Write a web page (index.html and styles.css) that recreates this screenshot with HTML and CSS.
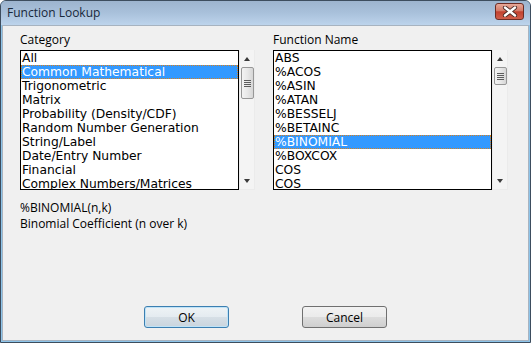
FILE: index.html
```html
<!DOCTYPE html>
<html lang="en">
<head>
    <meta charset="UTF-8">
    <title>Function Lookup</title>
    <link rel="stylesheet" href="styles.css">
</head>
<body>
<div class="window">
    <div class="titlebar">
        <span class="title">Function Lookup</span>
        <button class="close" title="Close">
            <svg width="16" height="11" viewBox="0 0 16 11">
                <path d="M3 1.5 L13 9.5 M13 1.5 L3 9.5" stroke="#4a2a26" stroke-width="4.2" stroke-linecap="round"/>
                <path d="M3 1.5 L13 9.5 M13 1.5 L3 9.5" stroke="#ffffff" stroke-width="2.4" stroke-linecap="round"/>
            </svg>
        </button>
    </div>
    <div class="client">
        <div class="lists">
            <div class="field">
                <div class="label">Category</div>
                <div class="listwrap">
                    <ul class="listbox">
                        <li>All</li>
                        <li class="selected">Common Mathematical</li>
                        <li>Trigonometric</li>
                        <li>Matrix</li>
                        <li>Probability (Density/CDF)</li>
                        <li>Random Number Generation</li>
                        <li>String/Label</li>
                        <li>Date/Entry Number</li>
                        <li>Financial</li>
                        <li>Complex Numbers/Matrices</li>
                    </ul>
                    <div class="scrollbar">
                        <span class="arrow up"></span>
                        <div class="track">
                            <div class="thumb big"><span class="grip"></span></div>
                        </div>
                        <span class="arrow down"></span>
                    </div>
                </div>
            </div>
            <div class="field">
                <div class="label">Function Name</div>
                <div class="listwrap">
                    <ul class="listbox">
                        <li>ABS</li>
                        <li>%ACOS</li>
                        <li>%ASIN</li>
                        <li>%ATAN</li>
                        <li>%BESSELJ</li>
                        <li>%BETAINC</li>
                        <li class="selected">%BINOMIAL</li>
                        <li>%BOXCOX</li>
                        <li>COS</li>
                        <li>COS</li>
                    </ul>
                    <div class="scrollbar">
                        <span class="arrow up"></span>
                        <div class="track">
                            <div class="thumb small"><span class="grip"></span></div>
                        </div>
                        <span class="arrow down"></span>
                    </div>
                </div>
            </div>
        </div>
        <div class="desc">
            <p>%BINOMIAL(n,k)</p>
            <p>Binomial Coefficient (n over k)</p>
        </div>
        <div class="buttons">
            <button class="btn default">OK</button>
            <button class="btn">Cancel</button>
        </div>
    </div>
</div>
</body>
</html>
```

FILE: styles.css
```css
/* dialog frame */
body {
    margin: 0;
    background: #ffffff;
    font-family: "Open Sans", "Noto Sans", sans-serif;
    font-size: 12px;
    color: #000;
}

.window {
    width: 531px;
    height: 343px;
    box-sizing: border-box;
    border: 1px solid #3d4d5e;
    border-radius: 6px 6px 0 0;
    background: #8cc4ea;
    display: flex;
    flex-direction: column;
    overflow: hidden;
}

.titlebar {
    height: 24px;
    flex: none;
    display: flex;
    align-items: center;
    justify-content: space-between;
    padding: 0 6px 0 6px;
    background: linear-gradient(180deg, #9db4ce 0%, #a9c1db 50%, #bdd4ec 100%);
}

.title {
    color: #18283a;
    font-size: 12px;
    margin-top: -1px;
}

.close {
    width: 29px;
    height: 17px;
    margin-top: -3px;
    padding: 0;
    border: 1px solid #6d2c24;
    border-radius: 3px;
    background: linear-gradient(180deg, #e7a898 0%, #d47a68 45%, #c2412f 52%, #cf5e4b 100%);
    display: flex;
    align-items: center;
    justify-content: center;
}

.client {
    flex: 1;
    margin: 0 1px 1px 1px;
    border: 1px solid #a7b3c0;
    background: #f0f0f0;
    display: flex;
    flex-direction: column;
    padding: 6px 17px 12px 17px;
}

/* list boxes */
.lists {
    display: flex;
    gap: 17px;
}

.field {
    width: 236px;
}

.label {
    height: 18px;
    line-height: 16px;
}

.listwrap {
    display: flex;
}

.listbox {
    list-style: none;
    margin: 0;
    padding: 0;
    width: 219px;
    height: 140px;
    box-sizing: border-box;
    border: 1px solid #000;
    background: #fff;
    overflow: hidden;
    font-family: "DejaVu Sans", Verdana, sans-serif;
    font-size: 12.3px;
}

.listbox li {
    height: 14px;
    line-height: 14px;
    padding-left: 1px;
    white-space: nowrap;
}

.listbox li.selected {
    background: #3399ff;
    color: #fff;
    outline: 1px dotted #d8801e;
    outline-offset: -1px;
}

.scrollbar {
    width: 16px;
    height: 140px;
    box-sizing: border-box;
    background: #f4f4f4;
    border: 1px solid #ebebeb;
    border-top: none;
    display: flex;
    flex-direction: column;
    align-items: center;
}

.arrow {
    flex: none;
    height: 17px;
    width: 14px;
    display: flex;
    align-items: center;
    justify-content: center;
}

.arrow::before {
    content: "";
    border-left: 3.5px solid transparent;
    border-right: 3.5px solid transparent;
}

.arrow.up::before {
    border-bottom: 4px solid #3a3a3a;
}

.arrow.down::before {
    border-top: 4px solid #3a3a3a;
}

.track {
    flex: 1;
    width: 100%;
    display: flex;
    flex-direction: column;
    align-items: center;
}

.thumb {
    width: 13px;
    box-sizing: border-box;
    border: 1px solid #979797;
    border-radius: 2px;
    background: linear-gradient(90deg, #f3f3f3 0%, #e8e8e8 50%, #d6d6d6 100%);
    display: flex;
    align-items: center;
    justify-content: center;
}

.thumb.big {
    height: 32px;
}

.thumb.small {
    height: 18px;
}

.grip {
    width: 7px;
    height: 7px;
    background: repeating-linear-gradient(180deg, #5c5c5c 0, #5c5c5c 1px, transparent 1px, transparent 2px);
}

/* description */
.desc {
    margin-top: 10px;
}

.desc p {
    margin: 0;
    line-height: 16px;
}

/* buttons */
.buttons {
    margin-top: auto;
    display: flex;
    gap: 73px;
    padding-left: 124px;
}

.btn {
    width: 85px;
    height: 22px;
    font-family: "Open Sans", "Noto Sans", sans-serif;
    font-size: 12px;
    color: #000;
    border: 1px solid #707070;
    border-radius: 3px;
    background: linear-gradient(180deg, #f2f2f2 0%, #ebebeb 49%, #dddddd 50%, #cfcfcf 100%);
    padding: 0;
}

.btn.default {
    border-color: #3c7fb1;
    box-shadow: inset 0 0 0 1px #bfe3f7;
    background: linear-gradient(180deg, #eef3f6 0%, #e4ebf0 49%, #d6dfe6 50%, #cad5de 100%);
}
```
